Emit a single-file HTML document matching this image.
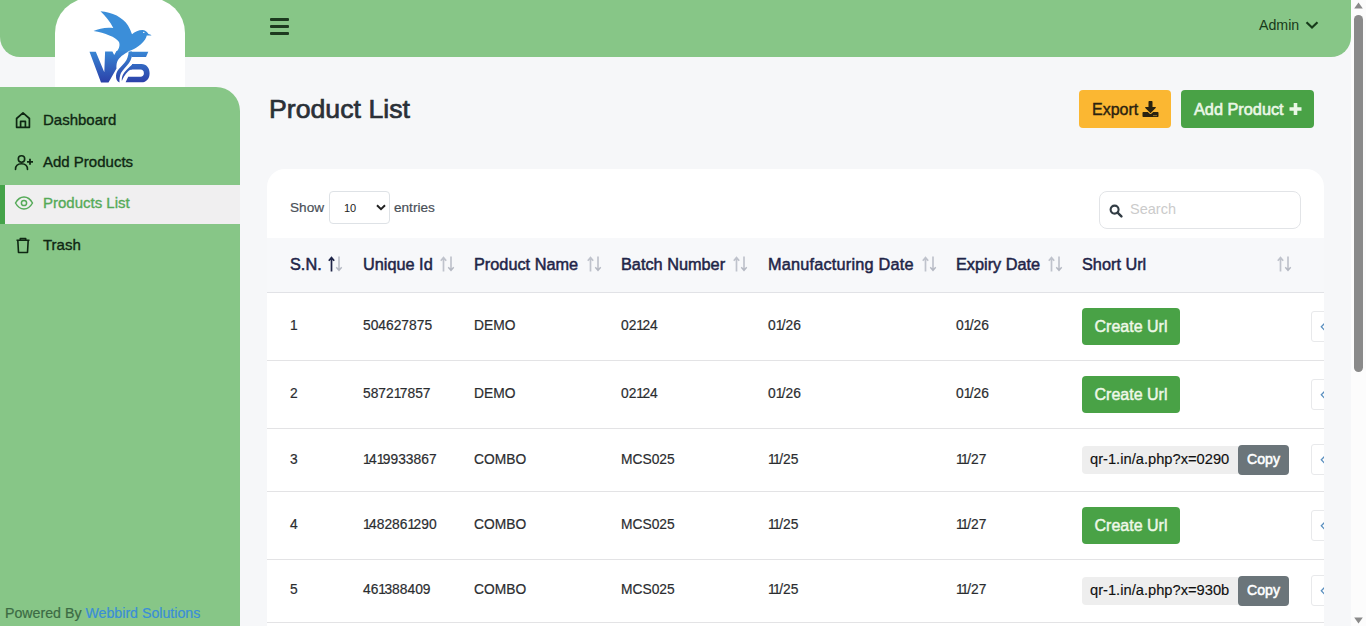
<!DOCTYPE html>
<html>
<head>
<meta charset="utf-8">
<style>
*{box-sizing:border-box;margin:0;padding:0}
html,body{width:1366px;height:626px;overflow:hidden;background:#F6F7F9;font-family:"Liberation Sans",sans-serif}
.abs{position:absolute}
#topbar{position:absolute;left:0;top:0;width:1351px;height:57px;background:#87C687;border-radius:0 0 20px 20px}
#logo{position:absolute;left:55px;top:-2px;width:130px;height:89px;background:#fff;border-radius:35px 35px 0 0}
#sidebar{position:absolute;left:0;top:87px;width:240px;height:539px;background:#87C687;border-radius:0 24px 0 0}
.menu{position:absolute;left:0;width:240px;height:39px;color:#0F2713;font-size:15px;line-height:39px;-webkit-text-stroke:0.35px currentColor}
.menu span{position:absolute;left:43px;top:0}
.menu svg{position:absolute;left:14px;top:11px}
.menu.active{background:#F0EFF0;color:#55AA58;left:5px;width:235px}
.menu.active:before{content:"";position:absolute;left:-5px;top:0;width:5px;height:39px;background:#45A349}
.menu.active span{left:38px}
.menu.active svg{left:9px;top:9px}
#powered{position:absolute;left:5px;top:605px;font-size:14.2px;color:#3C6B44;-webkit-text-stroke:0.2px currentColor}
#powered b{font-weight:normal;color:#3A8ED8}
#title{position:absolute;left:269px;top:94px;font-size:26.7px;color:#2A3037;-webkit-text-stroke:0.7px #2A3037}
.btn{position:absolute;top:90px;height:38px;border-radius:4px;font-size:16px;line-height:38px}
#export{left:1079px;width:92px;background:#FBB732;color:#2A2210;-webkit-text-stroke:0.4px #2A2210}
#add{left:1181px;width:133px;background:#49A246;color:#EAF7E6;font-size:16.3px;-webkit-text-stroke:0.6px #EAF7E6}
#card{position:absolute;left:267px;top:169px;width:1057px;height:470px;background:#fff;border-radius:18px 18px 0 0;overflow:hidden}
#scroll{position:absolute;left:1351px;top:0;width:15px;height:626px;background:#FCFCFC}

.th{position:absolute;top:68px;height:54px;line-height:54px;font-size:16.3px;color:#1F2548;white-space:nowrap;-webkit-text-stroke:0.5px #1F2548}
.tr{position:absolute;left:0;width:1057px;border-bottom:1px solid #E3E3E5}
.td i{font-style:normal;letter-spacing:-1.6px}
.td{position:absolute;top:-1px;font-size:13.8px;color:#2B2D30;white-space:nowrap;-webkit-text-stroke:0.2px #2B2D30}
.create{position:absolute;width:98px;height:37px;background:#49A246;border-radius:4px;color:#EEF8E8;font-size:16px;line-height:37px;text-align:center;-webkit-text-stroke:0.45px #EEF8E8}
.qr{position:absolute;width:156px;height:28px;background:#EEEEEE;border-radius:4px 0 0 4px;overflow:hidden;white-space:nowrap}
.qr span{position:absolute;left:8px;top:5px;font-size:14.7px;line-height:16px;color:#111;-webkit-text-stroke:0.15px #111}
.copy{position:absolute;width:51px;height:30px;background:#6B757A;border-radius:4px;color:#fff;font-size:14.1px;line-height:29px;text-align:center;-webkit-text-stroke:0.55px #fff}
.side{position:absolute;width:34px;height:31px;background:#fff;border:1px solid #E8E9EB;border-radius:3px}
</style>
</head>
<body>
<div id="topbar">
  <div id="ham" class="abs" style="left:270px;top:18px;width:19px;height:17px">
    <div class="abs" style="left:0;top:0;width:19px;height:3px;background:#1D3A1F;border-radius:1px"></div>
    <div class="abs" style="left:0;top:7px;width:19px;height:3px;background:#1D3A1F;border-radius:1px"></div>
    <div class="abs" style="left:0;top:14px;width:19px;height:3px;background:#1D3A1F;border-radius:1px"></div>
  </div>
  <div id="admin" class="abs" style="left:1259px;top:17px;font-size:14.2px;color:#173A1A;line-height:16px">Admin</div>
  <svg class="abs" style="left:1305px;top:20px" width="14" height="10" viewBox="0 0 14 10"><path d="M1.5 2.2 L7 7.5 L12.5 2.2" fill="none" stroke="#173A1A" stroke-width="2.2"/></svg>
</div>
<div id="logo">
  <svg class="abs" style="left:0;top:2px" width="130" height="87" viewBox="55 0 130 87">
    <defs>
      <linearGradient id="g1" gradientUnits="userSpaceOnUse" x1="0" y1="48" x2="0" y2="83">
        <stop offset="0" stop-color="#3A8ED9"/><stop offset="1" stop-color="#2B3FA8"/>
      </linearGradient>
    </defs>
    <path fill="#3B8ED9" d="M100.5,11.3 C112,12 123,17.5 128,25.5 C130,29 131.2,32 132,34.2 C135,31.5 139,29.8 143,30 C145.5,30.2 147.5,32.5 148.5,34 C149.5,34.2 150.5,34.5 151.5,35.5 L146.8,35.6 C145.5,41 140,46 134,49 C131,50.5 128.5,51.2 126,51.6 L116,52.5 C118.5,49.5 120.5,46 119,42 C116,37 105,33 93.5,31 C99,28.5 106,27 113.3,28 C110,21.5 105.5,16 100.5,11.3 Z"/>
    <circle cx="143.8" cy="32.4" r="0.7" fill="#fff"/>
    <path fill="url(#g1)" d="M89.5,51.8 L95.8,51.8 L104.3,72.3 L105.1,51.5 L112.4,51.5 L114.2,55 L116.5,51 L124,50 L128.6,51.6 C124,54 119,57.5 117.3,61.5 C116.4,64 116.3,66.5 116.5,68.5 L108.5,82.5 L101,82.5 Z"/>
    <path fill="url(#g1)" d="M130,51.8 L148.3,51.8 L146,57 L131.8,57 Z"/>
    <path fill="url(#g1)" d="M132.2,64 L141.5,64 C146.5,64 149.6,68 149.6,73.2 C149.6,78.5 146.5,82.3 141.5,82.3 L125.6,82.3 L128.2,76.8 L140.5,76.8 C142.6,76.8 143.9,75.3 143.9,73.2 C143.9,71 142.6,69.6 140.5,69.6 L130,69.6 Z"/>
    <path fill="url(#g1)" d="M128.6,51.5 L132,51.5 C132.5,55 131.5,59.5 129,63 C126.5,66.5 123,69.5 121,73 C119.8,75.5 119.3,79 119.5,82.5 C117,81.5 115.8,79 116,75.5 C116.2,72.5 118,69.5 120.7,67 C124,63.5 126.5,61 127.5,57.5 C128.2,55.5 128.6,53.5 128.6,51.5 Z"/>
    <path fill="url(#g1)" d="M133.5,63.8 C128.5,67.5 124.5,71.5 122.8,75 C121.8,77.5 121.6,79.5 121.9,81 C122.8,78 125,74.5 128,71.5 C129.5,70 131,69.5 132,69.6 Z"/>
  </svg>
</div>
<div id="sidebar"></div>
<div class="menu" style="top:100px">
  <svg width="18" height="18" viewBox="0 0 18 18"><path d="M2.6 16.3 V7.5 L9 1.9 L15.4 7.5 V16.3 Z M6.6 16.3 V10.3 H11.4 V16.3" fill="none" stroke="#0F2713" stroke-width="1.7" stroke-linejoin="round"/></svg>
  <span>Dashboard</span>
</div>
<div class="menu" style="top:142px">
  <svg width="20" height="18" viewBox="0 0 20 18"><circle cx="7.5" cy="6" r="3.2" fill="none" stroke="#0F2713" stroke-width="1.6"/><path d="M1.5 16.5 C1.5 12.5 4 10.8 7.5 10.8 C11 10.8 13.5 12.5 13.5 16.5" fill="none" stroke="#0F2713" stroke-width="1.6" stroke-linecap="round"/><path d="M16 5.8 V11.8 M13 8.8 H19" stroke="#0F2713" stroke-width="1.8"/></svg>
  <span>Add Products</span>
</div>
<div class="menu active" style="top:185px;line-height:36px">
  <svg width="20" height="18" viewBox="0 0 20 18"><path d="M1.5 9 C4 4.5 7 3 10 3 C13 3 16 4.5 18.5 9 C16 13.5 13 15 10 15 C7 15 4 13.5 1.5 9 Z" fill="none" stroke="#55AA58" stroke-width="1.5"/><circle cx="10" cy="9" r="2.6" fill="none" stroke="#55AA58" stroke-width="1.5"/></svg>
  <span>Products List</span>
</div>
<div class="menu" style="top:225px">
  <svg width="18" height="18" viewBox="0 0 18 18"><path d="M2.5 4.3 H15.5 M6.3 4.3 V2.5 H11.7 V4.3 M3.8 4.3 L4.5 16.5 H13.5 L14.2 4.3" fill="none" stroke="#0F2713" stroke-width="1.6" stroke-linejoin="round"/></svg>
  <span>Trash</span>
</div>
<div id="powered">Powered By <b>Webbird Solutions</b></div>
<div id="title">Product List</div>
<div class="btn" id="export"><span class="abs" style="left:13px;top:1px">Export</span>
  <svg class="abs" style="left:63px;top:11px" width="17" height="16" viewBox="0 0 512 512"><path fill="#2A2210" d="M216 0h80c13.3 0 24 10.7 24 24v168h87.7c17.8 0 26.7 21.5 14.1 34.1L269.7 378.3c-7.5 7.5-19.8 7.5-27.3 0L90.1 226.1c-12.6-12.6-3.7-34.1 14.1-34.1H192V24c0-13.3 10.7-24 24-24zm296 376v112c0 13.3-10.7 24-24 24H24c-13.3 0-24-10.7-24-24V376c0-13.3 10.7-24 24-24h146.7l49 49c20.1 20.1 52.5 20.1 72.6 0l49-49H488c13.3 0 24 10.7 24 24zm-124 88c0-11-9-20-20-20s-20 9-20 20 9 20 20 20 20-9 20-20zm64 0c0-11-9-20-20-20s-20 9-20 20 9 20 20 20 20-9 20-20z"/></svg>
</div>
<div class="btn" id="add"><span class="abs" style="left:13px;top:0">Add Product</span>
  <svg class="abs" style="left:107px;top:12px" width="15" height="14" viewBox="0 0 15 14"><path d="M7.5 1 V13 M1.5 7 H13.5" stroke="#EAF7E6" stroke-width="3.6"/></svg>
</div>
<div id="card">
  <div class="abs" style="left:23px;top:31px;font-size:13.6px;color:#4A5058;line-height:16px;-webkit-text-stroke:0.2px #4A5058">Show</div>
  <div class="abs" style="left:62px;top:22px;width:61px;height:33px;border:1px solid #DEE2E6;border-radius:4px;background:#fff">
    <div class="abs" style="left:14px;top:9px;font-size:11px;color:#222;line-height:14px">10</div>
    <svg class="abs" style="left:46px;top:12px" width="10" height="7" viewBox="0 0 10 7"><path d="M1 1.2 L5 5.2 L9 1.2" fill="none" stroke="#222" stroke-width="2"/></svg>
  </div>
  <div class="abs" style="left:127px;top:31px;font-size:13.6px;color:#4A5058;line-height:16px;-webkit-text-stroke:0.2px #4A5058">entries</div>
  <div class="abs" style="left:832px;top:22px;width:202px;height:38px;border:1px solid #E2E4E7;border-radius:8px;background:#fff">
    <svg class="abs" style="left:9px;top:12px" width="14" height="14" viewBox="0 0 14 14"><circle cx="5.6" cy="5.6" r="4" fill="none" stroke="#333D45" stroke-width="2.1"/><path d="M8.6 8.6 L12.4 12.4" stroke="#333D45" stroke-width="2.4" stroke-linecap="round"/></svg>
    <div class="abs" style="left:30px;top:9px;font-size:14.5px;color:#CBCBCB;line-height:16px">Search</div>
  </div>
  <div id="thead" class="abs" style="left:0;top:69px;width:1057px;height:55px;background:#F7F8FA;border-bottom:1px solid #E1E2E6"></div>
<div class="th" style="left:23px">S.N.</div>
<svg class="abs" style="left:61px;top:87px" width="15" height="16" viewBox="0 0 15 16"><path d="M3.5 15.5 V2 M0.8 4.8 L3.5 1.5 L6.2 4.8" fill="none" stroke="#1F2548" stroke-width="1.7"/><path d="M11 0.5 V14 M8.3 11.2 L11 14.5 L13.7 11.2" fill="none" stroke="#B4B8C2" stroke-width="1.4"/></svg>
<div class="th" style="left:96px">Unique Id</div>
<svg class="abs" style="left:173px;top:87px" width="15" height="16" viewBox="0 0 15 16"><path d="M3.5 15.5 V2 M0.8 4.8 L3.5 1.5 L6.2 4.8" fill="none" stroke="#BFC3CC" stroke-width="1.7"/><path d="M11 0.5 V14 M8.3 11.2 L11 14.5 L13.7 11.2" fill="none" stroke="#B4B8C2" stroke-width="1.4"/></svg>
<div class="th" style="left:207px">Product Name</div>
<svg class="abs" style="left:320px;top:87px" width="15" height="16" viewBox="0 0 15 16"><path d="M3.5 15.5 V2 M0.8 4.8 L3.5 1.5 L6.2 4.8" fill="none" stroke="#BFC3CC" stroke-width="1.7"/><path d="M11 0.5 V14 M8.3 11.2 L11 14.5 L13.7 11.2" fill="none" stroke="#B4B8C2" stroke-width="1.4"/></svg>
<div class="th" style="left:354px">Batch Number</div>
<svg class="abs" style="left:466px;top:87px" width="15" height="16" viewBox="0 0 15 16"><path d="M3.5 15.5 V2 M0.8 4.8 L3.5 1.5 L6.2 4.8" fill="none" stroke="#BFC3CC" stroke-width="1.7"/><path d="M11 0.5 V14 M8.3 11.2 L11 14.5 L13.7 11.2" fill="none" stroke="#B4B8C2" stroke-width="1.4"/></svg>
<div class="th" style="left:501px;letter-spacing:0.2px">Manufacturing Date</div>
<svg class="abs" style="left:655px;top:87px" width="15" height="16" viewBox="0 0 15 16"><path d="M3.5 15.5 V2 M0.8 4.8 L3.5 1.5 L6.2 4.8" fill="none" stroke="#BFC3CC" stroke-width="1.7"/><path d="M11 0.5 V14 M8.3 11.2 L11 14.5 L13.7 11.2" fill="none" stroke="#B4B8C2" stroke-width="1.4"/></svg>
<div class="th" style="left:689px">Expiry Date</div>
<svg class="abs" style="left:781px;top:87px" width="15" height="16" viewBox="0 0 15 16"><path d="M3.5 15.5 V2 M0.8 4.8 L3.5 1.5 L6.2 4.8" fill="none" stroke="#BFC3CC" stroke-width="1.7"/><path d="M11 0.5 V14 M8.3 11.2 L11 14.5 L13.7 11.2" fill="none" stroke="#B4B8C2" stroke-width="1.4"/></svg>
<div class="th" style="left:815px">Short Url</div>
<svg class="abs" style="left:1010px;top:87px" width="15" height="16" viewBox="0 0 15 16"><path d="M3.5 15.5 V2 M0.8 4.8 L3.5 1.5 L6.2 4.8" fill="none" stroke="#BFC3CC" stroke-width="1.7"/><path d="M11 0.5 V14 M8.3 11.2 L11 14.5 L13.7 11.2" fill="none" stroke="#B4B8C2" stroke-width="1.4"/></svg>
<div class="tr" style="top:124px;height:68px">
<div class="td" style="left:23px;line-height:68px;top:-1px"><i>1</i></div>
<div class="td" style="left:96px;line-height:68px;top:-1px">504627875</div>
<div class="td" style="left:207px;line-height:68px;top:-1px">DEMO</div>
<div class="td" style="left:354px;line-height:68px;top:-1px">02<i>1</i>24</div>
<div class="td" style="left:501px;line-height:68px;top:-1px">0<i>1</i>/26</div>
<div class="td" style="left:689px;line-height:68px;top:-1px">0<i>1</i>/26</div>
<div class="create" style="left:815px;top:15px">Create Url</div>
<div class="side" style="left:1044px;top:18px"><svg class="abs" style="left:7px;top:9px" width="8" height="12" viewBox="0 0 8 12"><path d="M6.8 1.2 L2.3 5.8 L6.8 10.4" fill="none" stroke="#5A8FBF" stroke-width="1.3"/></svg></div>
</div>
<div class="tr" style="top:192px;height:68px">
<div class="td" style="left:23px;line-height:68px;top:-1px">2</div>
<div class="td" style="left:96px;line-height:68px;top:-1px">5872<i>1</i>7857</div>
<div class="td" style="left:207px;line-height:68px;top:-1px">DEMO</div>
<div class="td" style="left:354px;line-height:68px;top:-1px">02<i>1</i>24</div>
<div class="td" style="left:501px;line-height:68px;top:-1px">0<i>1</i>/26</div>
<div class="td" style="left:689px;line-height:68px;top:-1px">0<i>1</i>/26</div>
<div class="create" style="left:815px;top:15px">Create Url</div>
<div class="side" style="left:1044px;top:18px"><svg class="abs" style="left:7px;top:9px" width="8" height="12" viewBox="0 0 8 12"><path d="M6.8 1.2 L2.3 5.8 L6.8 10.4" fill="none" stroke="#5A8FBF" stroke-width="1.3"/></svg></div>
</div>
<div class="tr" style="top:260px;height:63px">
<div class="td" style="left:23px;line-height:63px;top:-1px">3</div>
<div class="td" style="left:96px;line-height:63px;top:-1px"><i>1</i>4<i>1</i>9933867</div>
<div class="td" style="left:207px;line-height:63px;top:-1px">COMBO</div>
<div class="td" style="left:354px;line-height:63px;top:-1px">MCS025</div>
<div class="td" style="left:501px;line-height:63px;top:-1px"><i>1</i><i>1</i>/25</div>
<div class="td" style="left:689px;line-height:63px;top:-1px"><i>1</i><i>1</i>/27</div>
<div class="qr" style="left:815px;top:17px"><span>qr-1.in/a.php?x=0290</span></div>
<div class="copy" style="left:971px;top:16px">Copy</div>
<div class="side" style="left:1044px;top:15px"><svg class="abs" style="left:7px;top:9px" width="8" height="12" viewBox="0 0 8 12"><path d="M6.8 1.2 L2.3 5.8 L6.8 10.4" fill="none" stroke="#5A8FBF" stroke-width="1.3"/></svg></div>
</div>
<div class="tr" style="top:323px;height:68px">
<div class="td" style="left:23px;line-height:68px;top:-1px">4</div>
<div class="td" style="left:96px;line-height:68px;top:-1px"><i>1</i>48286<i>1</i>290</div>
<div class="td" style="left:207px;line-height:68px;top:-1px">COMBO</div>
<div class="td" style="left:354px;line-height:68px;top:-1px">MCS025</div>
<div class="td" style="left:501px;line-height:68px;top:-1px"><i>1</i><i>1</i>/25</div>
<div class="td" style="left:689px;line-height:68px;top:-1px"><i>1</i><i>1</i>/27</div>
<div class="create" style="left:815px;top:15px">Create Url</div>
<div class="side" style="left:1044px;top:18px"><svg class="abs" style="left:7px;top:9px" width="8" height="12" viewBox="0 0 8 12"><path d="M6.8 1.2 L2.3 5.8 L6.8 10.4" fill="none" stroke="#5A8FBF" stroke-width="1.3"/></svg></div>
</div>
<div class="tr" style="top:391px;height:63px">
<div class="td" style="left:23px;line-height:63px;top:-2px">5</div>
<div class="td" style="left:96px;line-height:63px;top:-2px">46<i>1</i>388409</div>
<div class="td" style="left:207px;line-height:63px;top:-2px">COMBO</div>
<div class="td" style="left:354px;line-height:63px;top:-2px">MCS025</div>
<div class="td" style="left:501px;line-height:63px;top:-2px"><i>1</i><i>1</i>/25</div>
<div class="td" style="left:689px;line-height:63px;top:-2px"><i>1</i><i>1</i>/27</div>
<div class="qr" style="left:815px;top:17px"><span>qr-1.in/a.php?x=930b</span></div>
<div class="copy" style="left:971px;top:16px">Copy</div>
<div class="side" style="left:1044px;top:15px"><svg class="abs" style="left:7px;top:9px" width="8" height="12" viewBox="0 0 8 12"><path d="M6.8 1.2 L2.3 5.8 L6.8 10.4" fill="none" stroke="#5A8FBF" stroke-width="1.3"/></svg></div>
</div>
<div class="tr" style="top:454px;height:77px">
</div>
</div>
<div id="scroll">
<svg class="abs" style="left:3px;top:2px" width="9" height="7" viewBox="0 0 9 7"><path d="M4.5 0.5 L8.8 6.5 H0.2 Z" fill="#8A8A8A"/></svg>
<div class="abs" style="left:3px;top:15px;width:9px;height:357px;background:#8A8A8A;border-radius:5px"></div>
<svg class="abs" style="left:3px;top:617px" width="9" height="7" viewBox="0 0 9 7"><path d="M4.5 6.5 L8.8 0.5 H0.2 Z" fill="#8A8A8A"/></svg>
</div>
</body>
</html>
